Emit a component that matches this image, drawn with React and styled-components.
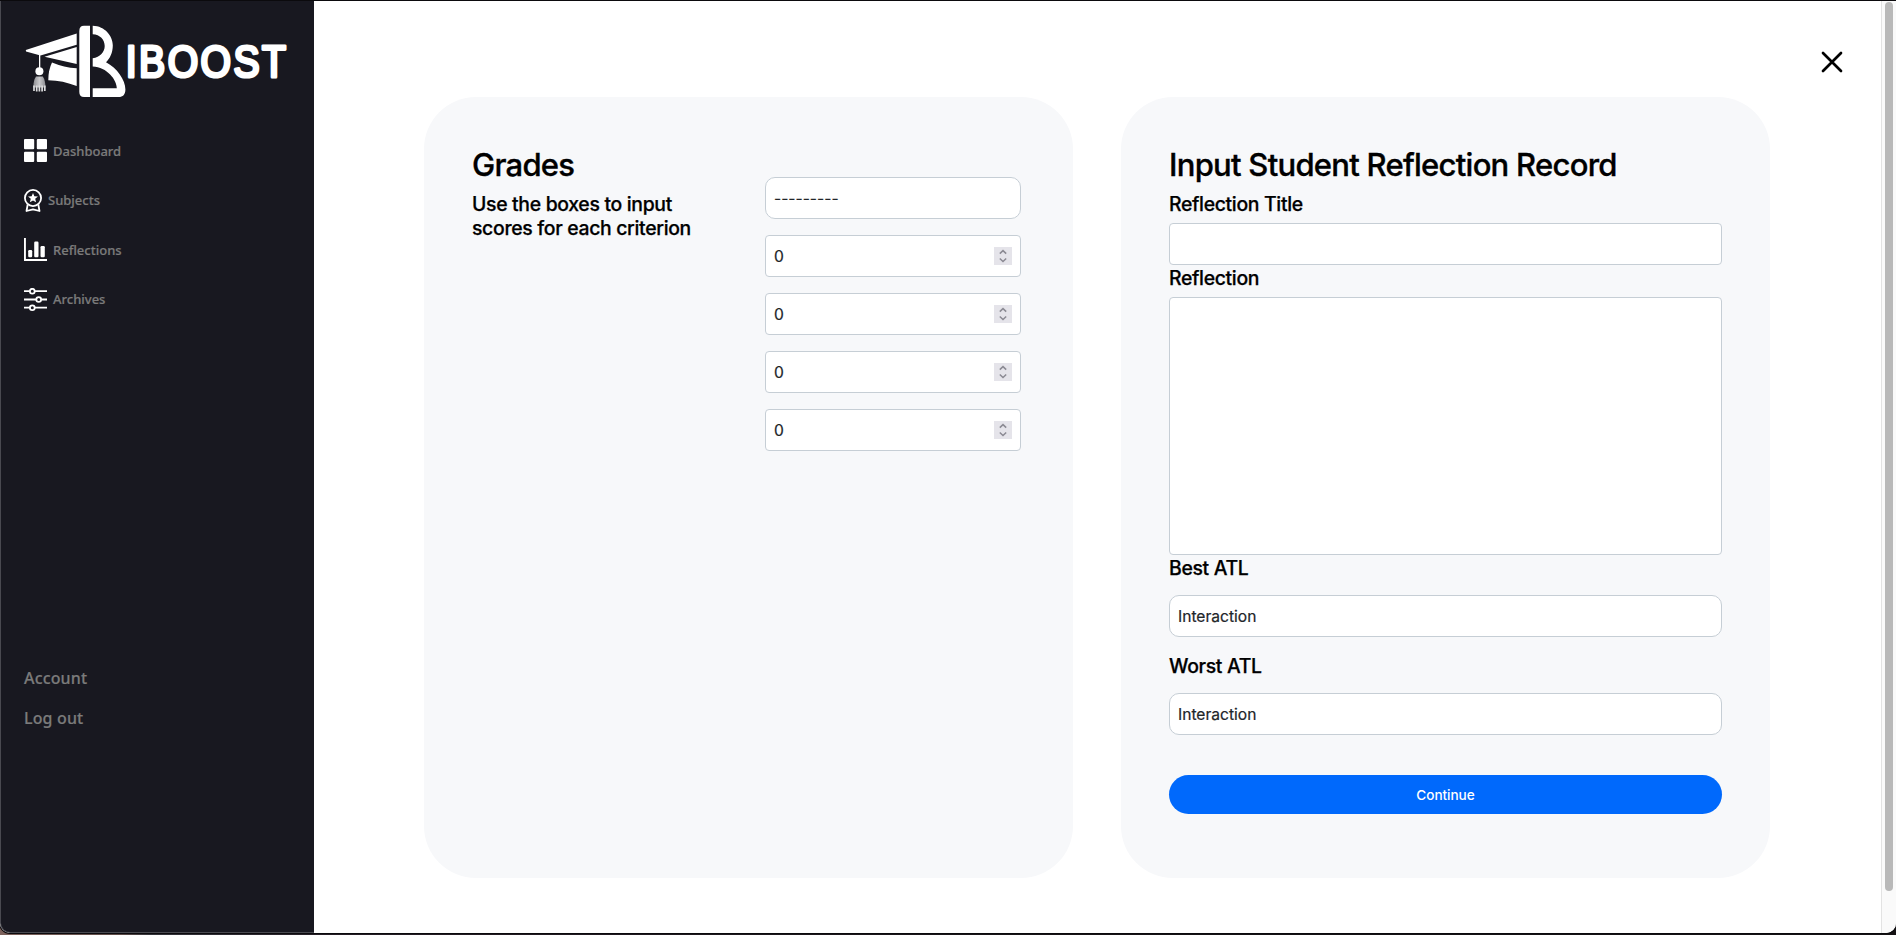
import React from "react";
import styled, { createGlobalStyle } from "styled-components";

const Global = createGlobalStyle`
  *, *::before, *::after { box-sizing: border-box; }
  body { margin: 0; background: #151214; overflow: hidden; }
  h1, p { margin: 0; }
  input, textarea, select, button { font: inherit; margin: 0; }
`;

const ui = `Inter, "Liberation Sans", sans-serif`;

const Backdrop = styled.div`
  height: 935px;
  padding-top: 1px;
  background: linear-gradient(90deg, #7d625c 0, #5d4a46 120px, #33333a 150px, #251d25 330px, #151214 1200px);
  font-family: ${ui};
`;

const Window = styled.div`
  display: flex;
  height: 932px;
  background: #fff;
  border-radius: 0 0 10px 10px;
  overflow: hidden;
  box-shadow: 0 0 0 1px #0b0a0d;
`;

const Sidebar = styled.aside`
  display: flex;
  flex-direction: column;
  flex: 0 0 314px;
  background: #181820;
  border-left: 1px solid #494950;
  border-bottom: 1px solid #494950;
  border-bottom-left-radius: 10px;
  font-family: "Noto Sans", "Open Sans", sans-serif;
  font-weight: 500;
  color: #7b7b7b;
  -webkit-text-stroke: 0.2px #7b7b7b;
`;

const LogoSvg = styled.svg`
  display: block;
  width: 313px;
  height: 125px;
  flex: none;
`;

const Nav = styled.nav`
  display: flex;
  flex-direction: column;
`;

const NavItem = styled.a`
  display: flex;
  align-items: center;
  gap: 6px;
  height: 49.5px;
  padding-left: 23px;
  font-size: 13px;
  svg { display: block; flex: none; }
`;

const Footer = styled.div`
  display: flex;
  flex-direction: column;
  margin-top: 334.3px;
  padding-left: 23px;
`;

const FooterLink = styled.a`
  height: 40px;
  line-height: 40px;
  font-size: 16px;
  letter-spacing: 0.15px;
`;

const Main = styled.main`
  flex: 1;
  display: flex;
  flex-direction: column;
`;

const TopBar = styled.header`
  display: flex;
  justify-content: flex-end;
  height: 96px;
  padding: 49px 37px 0 0;
`;

const CloseButton = styled.button`
  width: 24px;
  height: 24px;
  padding: 0;
  border: 0;
  background: none;
  svg { display: block; }
`;

const Cards = styled.div`
  display: grid;
  grid-template-columns: 649px 649px;
  gap: 48px;
  padding-left: 110px;
`;

const Card = styled.section`
  display: flex;
  flex-direction: ${(p) => (p.$row ? "row" : "column")};
  justify-content: ${(p) => (p.$row ? "space-between" : "flex-start")};
  height: 781px;
  padding: 48px 48px 0;
  padding-right: ${(p) => (p.$row ? "52px" : "48px")};
  border-radius: 52px;
  background: #f7f8fa;
`;

const Intro = styled.div`
  width: 230px;
`;

const Title = styled.h1`
  padding-bottom: 1px;
  font-size: 31px;
  line-height: 39px;
  font-weight: 500;
  letter-spacing: -0.73px;
  white-space: nowrap;
  color: #000;
  -webkit-text-stroke: 0.35px #000;
`;

const Label = styled.p`
  font-size: 19.4px;
  line-height: 24px;
  font-weight: 500;
  letter-spacing: -0.32px;
  color: #000;
  margin-top: ${(p) => p.$top || "0"};
  -webkit-text-stroke: 0.25px #000;
`;

const Scores = styled.div`
  display: flex;
  flex-direction: column;
  gap: 16px;
  width: 256px;
  padding-top: 32px;
`;

const Field = styled.div`
  display: flex;
  align-items: center;
  justify-content: space-between;
  height: ${(p) => p.$height || "42px"};
  flex: none;
  margin-top: ${(p) => p.$top || "0"};
  padding: 0 8px;
  border: 1px solid #c6ced5;
  border-radius: ${(p) => (p.$round ? "10px" : "4px")};
  background: #fff;
  color: #212529;
  font-size: 15.6px;
  -webkit-text-stroke: 0.2px #212529;
`;

const Stepper = styled.span`
  display: block;
  width: 18px;
  height: 18px;
  background: #e5e4ea;
  svg { display: block; }
`;

const Submit = styled.button`
  height: 39px;
  margin-top: 40px;
  border: 0;
  border-radius: 20px;
  background: #0069fc;
  color: #fff;
  font-size: 13.6px;
  font-weight: 500;
  letter-spacing: -0.06px;
`;

const ScrollTrack = styled.div`
  flex: 0 0 15px;
  padding: 1px 3px 0;
  border-left: 1px solid #e3e3e3;
  background: #fafafa;
`;

const ScrollThumb = styled.div`
  width: 8px;
  height: 889px;
  border-radius: 4px;
  background: #b9b9b9;
`;

function Logo() {
  return (
    <LogoSvg viewBox="1 1 313 125" fill="#fff">
      <defs>
        <linearGradient id="tassel" x1="0" x2="1">
          <stop offset="0" stopColor="#8d8d92" />
          <stop offset=".5" stopColor="#c9c9cc" />
          <stop offset="1" stopColor="#8d8d92" />
        </linearGradient>
      </defs>
      <path d="M25.8 50 76.7 33.5V44.7L40.5 55.4 26 51.6Z" />
      <path d="M44.5 56.8 76.7 47V64Z" />
      <path d="M52 62.5Q64 67.5 76.7 68.3V86Q63 80.5 48.3 80.2 48.3 70 52 62.5Z" />
      <path d="M90 25.7V97H84Q79.3 97 79.3 92V31Q79.3 25.7 84 25.7Z" />
      <path d="M92.7 25.7C105 26 112.8 36 112.8 45.5C112.8 52.5 110 58.5 106 62.3C117 68 125.4 80 125.4 89.5C125.4 94.5 123 97 118.5 97H92.7V88.2H116.8C117 80 107 67 92.7 66.5V58.3C100 57 104.7 52 104.7 46C104.7 39.5 100 34.5 92.7 34.2Z" />
      <path d="M39 54h1.3v15H39Z" />
      <circle cx="39.4" cy="71.3" r="4" />
      <path d="M36 76.5h6.8Q45.3 80 45.5 87.5H33.3Q33.5 80 36 76.5Z" fill="url(#tassel)" />
      <path d="M34 85.5V91M36.7 85.5V91.5M39.4 85.5V91.5M42.1 85.5V91.5M44.8 85.5V91" stroke="#dcdcde" strokeWidth="1.7" />
      <text
        transform="translate(125.8 76.6) scale(.9 1)"
        fontFamily="Liberation Sans, Arial, sans-serif"
        fontSize="43.5"
        textLength="178"
        lengthAdjust="spacing"
        stroke="#fff"
        strokeWidth="3.2"
        strokeLinejoin="round"
      >
        IBOOST
      </text>
    </LogoSvg>
  );
}

const DashboardIcon = () => (
  <svg width="23" height="23" viewBox="0 0 23 23" fill="#fff">
    <rect width="10.2" height="10.2" rx="1" />
    <rect x="12.8" width="10.2" height="10.2" rx="1" />
    <rect y="12.8" width="10.2" height="10.2" rx="1" />
    <rect x="12.8" y="12.8" width="10.2" height="10.2" rx="1" />
  </svg>
);

const BadgeIcon = () => (
  <svg width="18" height="23" viewBox="0 0 18 23" fill="none" stroke="#fff" strokeWidth="1.8">
    <circle cx="9" cy="9" r="8.1" />
    <path d="M3.7 15.5 2.5 22 9 20.3 15.5 22 14.3 15.5" strokeLinejoin="round" />
    <path d="m9 3.9 1.35 3.35 3.6.2-2.75 2.3.9 3.5L9 11.4l-3.1 1.85.9-3.5-2.75-2.3 3.6-.2Z" fill="#fff" stroke="none" />
  </svg>
);

const ChartIcon = () => (
  <svg width="23" height="23" viewBox="0 0 23 23" fill="#fff">
    <path d="M0 0h1.9v21.1H23V23H0Z" />
    <rect x="4.2" y="12" width="4" height="7.2" rx="1.2" />
    <rect x="10.2" y="3.5" width="4.3" height="15.7" rx="1.2" />
    <rect x="16.5" y="8" width="4.3" height="11.2" rx="1.2" />
  </svg>
);

const SlidersIcon = () => (
  <svg width="23" height="23" viewBox="0 0 23 23" fill="none" stroke="#fff" strokeWidth="1.8">
    <path d="M0 3.2h5.8M10.8 3.2H23M0 11.5h12.2M17.2 11.5H23M0 19.7h5.8M10.8 19.7H23" />
    <circle cx="8.3" cy="3.2" r="2.4" />
    <circle cx="14.7" cy="11.5" r="2.4" />
    <circle cx="8.3" cy="19.7" r="2.4" />
  </svg>
);

const NAV = [
  ["Dashboard", DashboardIcon],
  ["Subjects", BadgeIcon],
  ["Reflections", ChartIcon],
  ["Archives", SlidersIcon],
];

function NumberField({ value }) {
  return (
    <Field>
      <span>{value}</span>
      <Stepper>
        <svg width="18" height="18" fill="none" stroke="#8b8a93" strokeWidth="1.5">
          <path d="M5.8 6.6 9 3.6l3.2 3M5.8 11.5l3.2 3 3.2-3" />
        </svg>
      </Stepper>
    </Field>
  );
}

export default function App() {
  return (
    <Backdrop>
      <Global />
      <Window>
        <Sidebar>
          <Logo />
          <Nav>
            {NAV.map(([name, Icon]) => (
              <NavItem key={name}>
                <Icon />
                <span>{name}</span>
              </NavItem>
            ))}
          </Nav>
          <Footer>
            <FooterLink>Account</FooterLink>
            <FooterLink>Log out</FooterLink>
          </Footer>
        </Sidebar>
        <Main>
          <TopBar>
            <CloseButton aria-label="Close">
              <svg width="24" height="24" stroke="#000" strokeWidth="2.7" strokeLinecap="round">
                <path d="M3 3 21 21M21 3 3 21" />
              </svg>
            </CloseButton>
          </TopBar>
          <Cards>
            <Card $row>
              <Intro>
                <Title>Grades</Title>
                <Label $top="7px">Use the boxes to input scores for each criterion</Label>
              </Intro>
              <Scores>
                <Field $round>---------</Field>
                {[0, 0, 0, 0].map((v, i) => (
                  <NumberField key={i} value={v} />
                ))}
              </Scores>
            </Card>
            <Card>
              <Title>Input Student Reflection Record</Title>
              <Label $top="7px">Reflection Title</Label>
              <Field $top="7px" />
              <Label $top="1px">Reflection</Label>
              <Field $top="7px" $height="258px" />
              <Label $top="1px">Best ATL</Label>
              <Field $round $top="15px">Interaction</Field>
              <Label $top="17px">Worst ATL</Label>
              <Field $round $top="15px">Interaction</Field>
              <Submit>Continue</Submit>
            </Card>
          </Cards>
        </Main>
        <ScrollTrack>
          <ScrollThumb />
        </ScrollTrack>
      </Window>
    </Backdrop>
  );
}
